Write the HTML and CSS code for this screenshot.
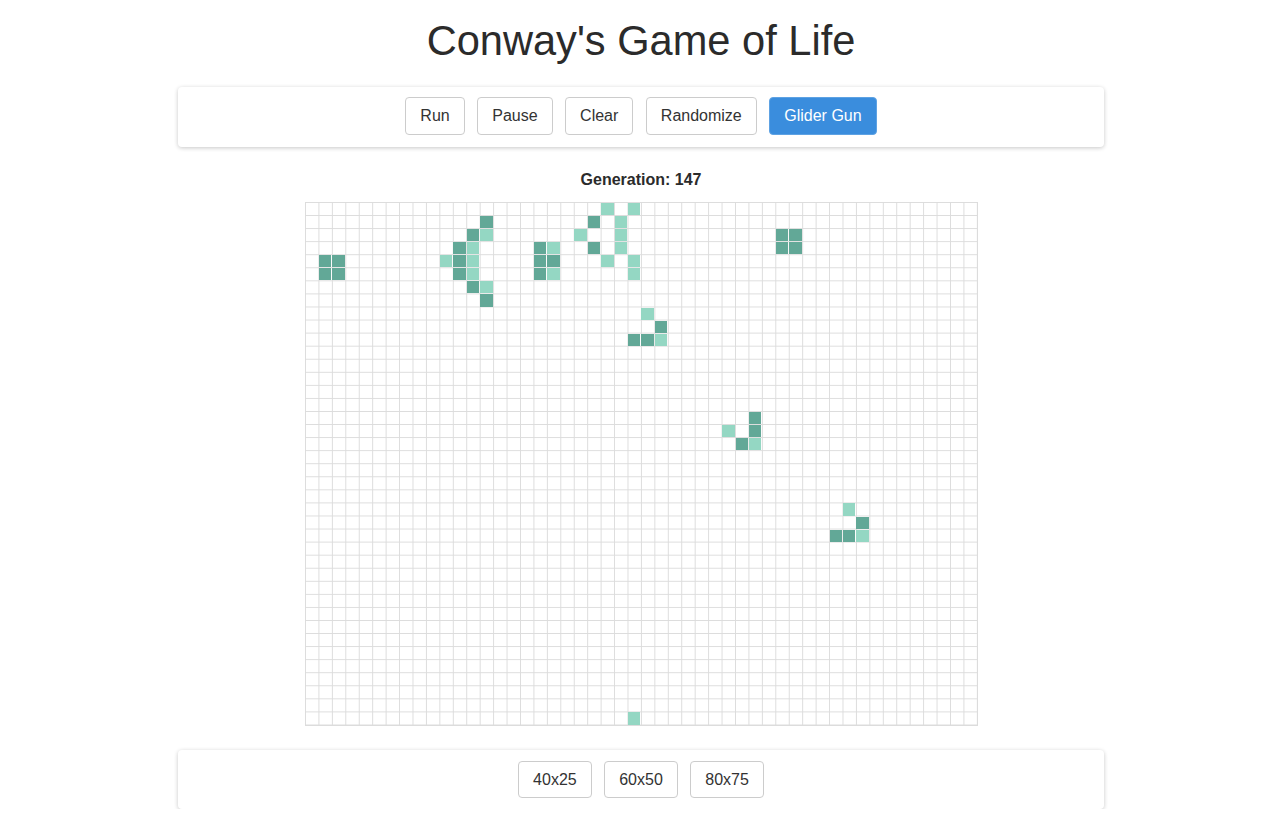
FILE: index.html
```html
<!DOCTYPE html>
<html lang="en">
<head>
<meta charset="utf-8">
<title>Conway's Game of Life</title>
<link rel="stylesheet" href="styles.css">
</head>
<body>
<h1 class="title">Conway's Game of Life</h1>
<div class="card controls">
  <button class="btn">Run</button>
  <button class="btn">Pause</button>
  <button class="btn">Clear</button>
  <button class="btn">Randomize</button>
  <button class="btn btn-primary">Glider Gun</button>
</div>
<div class="generation">Generation: 147</div>
<div class="board">
  <div class="cell old" style="grid-area:5/2"></div>
  <div class="cell old" style="grid-area:5/3"></div>
  <div class="cell old" style="grid-area:6/2"></div>
  <div class="cell old" style="grid-area:6/3"></div>

  <div class="cell old" style="grid-area:2/14"></div>
  <div class="cell old" style="grid-area:3/13"></div>
  <div class="cell new" style="grid-area:3/14"></div>
  <div class="cell old" style="grid-area:4/12"></div>
  <div class="cell new" style="grid-area:4/13"></div>
  <div class="cell new" style="grid-area:5/11"></div>
  <div class="cell old" style="grid-area:5/12"></div>
  <div class="cell new" style="grid-area:5/13"></div>
  <div class="cell old" style="grid-area:6/12"></div>
  <div class="cell new" style="grid-area:6/13"></div>
  <div class="cell old" style="grid-area:7/13"></div>
  <div class="cell new" style="grid-area:7/14"></div>
  <div class="cell old" style="grid-area:8/14"></div>

  <div class="cell old" style="grid-area:4/18"></div>
  <div class="cell new" style="grid-area:4/19"></div>
  <div class="cell old" style="grid-area:5/18"></div>
  <div class="cell old" style="grid-area:5/19"></div>
  <div class="cell old" style="grid-area:6/18"></div>
  <div class="cell new" style="grid-area:6/19"></div>

  <div class="cell new" style="grid-area:1/23"></div>
  <div class="cell new" style="grid-area:1/25"></div>
  <div class="cell old" style="grid-area:2/22"></div>
  <div class="cell new" style="grid-area:2/24"></div>
  <div class="cell new" style="grid-area:3/21"></div>
  <div class="cell new" style="grid-area:3/24"></div>
  <div class="cell old" style="grid-area:4/22"></div>
  <div class="cell new" style="grid-area:4/24"></div>
  <div class="cell new" style="grid-area:5/23"></div>
  <div class="cell new" style="grid-area:5/25"></div>
  <div class="cell new" style="grid-area:6/25"></div>

  <div class="cell old" style="grid-area:3/36"></div>
  <div class="cell old" style="grid-area:3/37"></div>
  <div class="cell old" style="grid-area:4/36"></div>
  <div class="cell old" style="grid-area:4/37"></div>

  <div class="cell new" style="grid-area:9/26"></div>
  <div class="cell old" style="grid-area:10/27"></div>
  <div class="cell old" style="grid-area:11/25"></div>
  <div class="cell old" style="grid-area:11/26"></div>
  <div class="cell new" style="grid-area:11/27"></div>

  <div class="cell old" style="grid-area:17/34"></div>
  <div class="cell new" style="grid-area:18/32"></div>
  <div class="cell old" style="grid-area:18/34"></div>
  <div class="cell old" style="grid-area:19/33"></div>
  <div class="cell new" style="grid-area:19/34"></div>

  <div class="cell new" style="grid-area:24/41"></div>
  <div class="cell old" style="grid-area:25/42"></div>
  <div class="cell old" style="grid-area:26/40"></div>
  <div class="cell old" style="grid-area:26/41"></div>
  <div class="cell new" style="grid-area:26/42"></div>

  <div class="cell new" style="grid-area:40/25"></div>
</div>
<div class="card sizes">
  <button class="btn">40x25</button>
  <button class="btn">60x50</button>
  <button class="btn">80x75</button>
</div>
</body>
</html>
```

FILE: styles.css
```css
* {
  box-sizing: border-box;
}

body {
  margin: 0;
  padding-right: 5px;
  background: #ffffff;
  color: #333333;
  font-family: "Liberation Sans", Arial, Helvetica, sans-serif;
  display: flex;
  flex-direction: column;
  align-items: center;
}

.title {
  margin: 17px 0 22px;
  font-size: 41.6px;
  line-height: 48px;
  font-weight: normal;
  color: #2b2b2b;
}

.card {
  width: 926px;
  background: #ffffff;
  border-radius: 4px;
  box-shadow: 0 1px 4px rgba(0, 0, 0, 0.22);
  display: flex;
  justify-content: center;
  gap: 12.5px;
}

.controls {
  padding: 10px 0 12px;
}

.sizes {
  margin-top: 24px;
  padding: 11px 0 11px;
}

.btn {
  font-family: "Liberation Sans", Arial, Helvetica, sans-serif;
  font-size: 16px;
  line-height: 18px;
  padding: 9px 14px;
  background: #ffffff;
  color: #333333;
  border: 1px solid #cccccc;
  border-radius: 4px;
}

.sizes .btn {
  padding: 9px 14px 8px;
}

.btn-primary {
  background: #3a8ddd;
  border-color: #5ea2e3;
  color: #ffffff;
}

.generation {
  margin: 24px 0 13px;
  font-size: 16px;
  line-height: 18px;
  font-weight: bold;
  color: #2b2b2b;
}

.board {
  width: 673px;
  height: 524px;
  display: grid;
  grid-template-columns: repeat(50, 13.44px);
  grid-template-rows: repeat(40, 13.075px);
  background-color: #ffffff;
  background-image:
    linear-gradient(to right, #dcdcdc 1px, transparent 1px),
    linear-gradient(to bottom, #dcdcdc 1px, transparent 1px);
  background-size: 13.44px 13.075px;
  border-right: 1px solid #dcdcdc;
  border-bottom: 1px solid #dcdcdc;
}

.cell {
  margin: 1px 0 0 1px;
}

.old {
  background: #62a897;
}

.new {
  background: #94d7c3;
}
```
